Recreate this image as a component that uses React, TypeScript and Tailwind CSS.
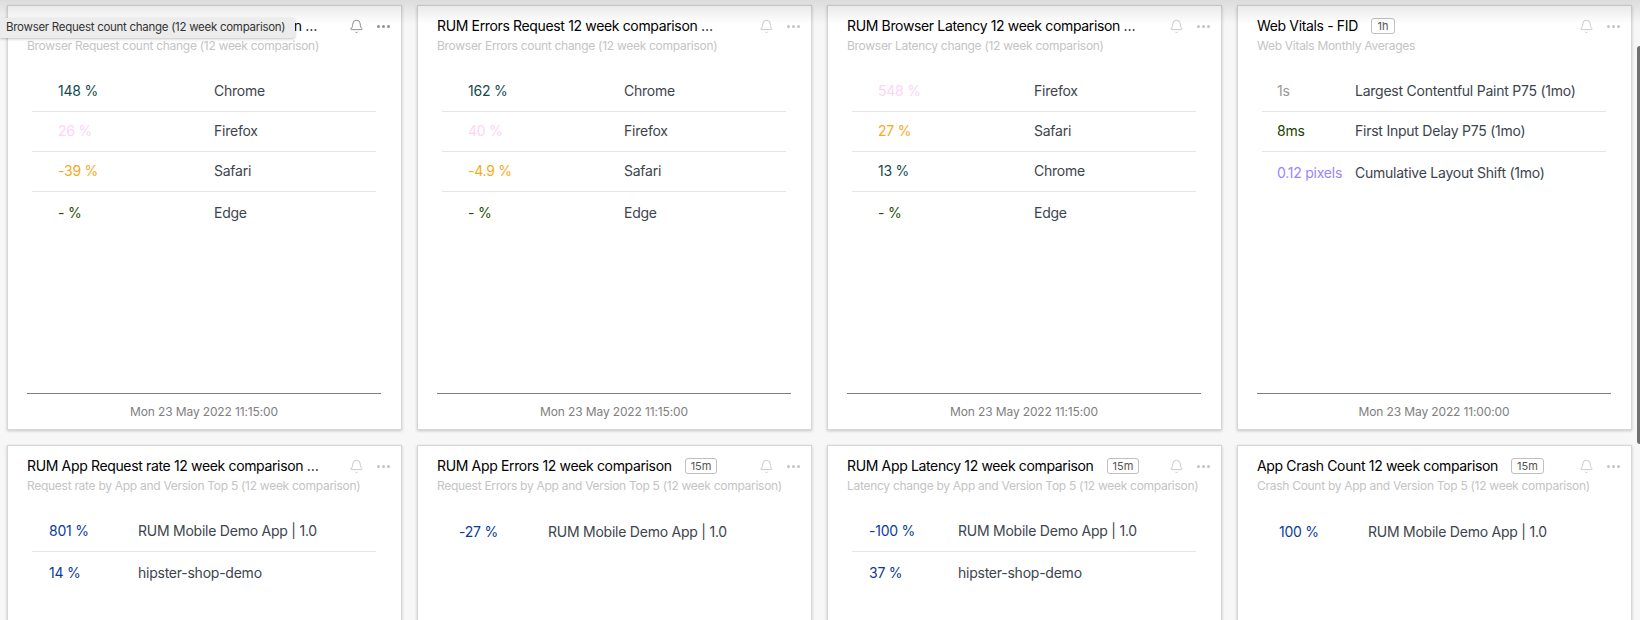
import { Bell } from "lucide-react";

type Row = { value: string; label: string; color: string };

type Panel = {
    title: string;
    subtitle: string;
    badge?: string;
    time?: string;
    valueCol: string;
    rows: Row[];
    hovered?: boolean;
};

const TEAL = "text-[#0f4c4c]";
const PINK = "text-[#fdd5f6]";
const ORANGE = "text-[#f8a922]";
const GREEN = "text-[#1d5200]";
const BLUE = "text-[#0b3a9e]";

const panels: Panel[] = [
    {
        title: "RUM Browser Request 12 week comparison …",
        subtitle: "Browser Request count change (12 week comparison)",
        time: "Mon 23 May 2022 11:15:00",
        valueCol: "w-[182px] pl-[26px]",
        hovered: true,
        rows: [
            { value: "148 %", label: "Chrome", color: TEAL },
            { value: "26 %", label: "Firefox", color: PINK },
            { value: "-39 %", label: "Safari", color: ORANGE },
            { value: "- %", label: "Edge", color: GREEN },
        ],
    },
    {
        title: "RUM Errors Request 12 week comparison …",
        subtitle: "Browser Errors count change (12 week comparison)",
        time: "Mon 23 May 2022 11:15:00",
        valueCol: "w-[182px] pl-[26px]",
        rows: [
            { value: "162 %", label: "Chrome", color: TEAL },
            { value: "40 %", label: "Firefox", color: PINK },
            { value: "-4.9 %", label: "Safari", color: ORANGE },
            { value: "- %", label: "Edge", color: GREEN },
        ],
    },
    {
        title: "RUM Browser Latency 12 week comparison …",
        subtitle: "Browser Latency change (12 week comparison)",
        time: "Mon 23 May 2022 11:15:00",
        valueCol: "w-[182px] pl-[26px]",
        rows: [
            { value: "548 %", label: "Firefox", color: PINK },
            { value: "27 %", label: "Safari", color: ORANGE },
            { value: "13 %", label: "Chrome", color: TEAL },
            { value: "- %", label: "Edge", color: GREEN },
        ],
    },
    {
        title: "Web Vitals - FID",
        subtitle: "Web Vitals Monthly Averages",
        badge: "1h",
        time: "Mon 23 May 2022 11:00:00",
        valueCol: "w-[93px] pl-[15px]",
        rows: [
            { value: "1s", label: "Largest Contentful Paint P75 (1mo)", color: "text-[#999999]" },
            { value: "8ms", label: "First Input Delay P75 (1mo)", color: "text-[#1a4000]" },
            { value: "0.12 pixels", label: "Cumulative Layout Shift (1mo)", color: "text-[#9b85ff]" },
        ],
    },
    {
        title: "RUM App Request rate 12 week comparison …",
        subtitle: "Request rate by App and Version Top 5 (12 week comparison)",
        valueCol: "w-[106px] pl-[17px]",
        rows: [
            { value: "801 %", label: "RUM Mobile Demo App | 1.0", color: BLUE },
            { value: "14 %", label: "hipster-shop-demo", color: BLUE },
        ],
    },
    {
        title: "RUM App Errors 12 week comparison",
        subtitle: "Request Errors by App and Version Top 5 (12 week comparison)",
        badge: "15m",
        valueCol: "w-[106px] pl-[17px]",
        rows: [{ value: "-27 %", label: "RUM Mobile Demo App | 1.0", color: BLUE }],
    },
    {
        title: "RUM App Latency 12 week comparison",
        subtitle: "Latency change by App and Version Top 5 (12 week comparison)",
        badge: "15m",
        valueCol: "w-[106px] pl-[17px]",
        rows: [
            { value: "-100 %", label: "RUM Mobile Demo App | 1.0", color: BLUE },
            { value: "37 %", label: "hipster-shop-demo", color: BLUE },
        ],
    },
    {
        title: "App Crash Count 12 week comparison",
        subtitle: "Crash Count by App and Version Top 5 (12 week comparison)",
        badge: "15m",
        valueCol: "w-[106px] pl-[17px]",
        rows: [{ value: "100 %", label: "RUM Mobile Demo App | 1.0", color: BLUE }],
    },
];

function Dots({ className }: { className: string }) {
    return (
        <svg width="13" height="3" viewBox="0 0 13 3" className={className} fill="currentColor">
            <circle cx="1.5" cy="1.5" r="1.5" />
            <circle cx="6.5" cy="1.5" r="1.5" />
            <circle cx="11.5" cy="1.5" r="1.5" />
        </svg>
    );
}

function Card({ panel }: { panel: Panel }) {
    return (
        <div className="relative flex h-[425px] flex-col border border-[#d6d6d6] bg-white shadow-[0_1px_3px_rgba(0,0,0,0.2)]">
            <div className="flex h-[30px] items-end pl-[19px] pr-[11px]">
                <div className="flex min-w-0 flex-1 items-center">
                    <span className="whitespace-nowrap text-[14px] leading-[20px] tracking-[-0.35px] text-black">
                        {panel.title}
                    </span>
                    {panel.badge && (
                        <span className="ml-[13px] flex h-[16px] min-w-[24px] items-center justify-center rounded-[3px] border border-[#c0c0c0] px-[5px] text-[11px] text-[#555555]">
                            {panel.badge}
                        </span>
                    )}
                </div>
                <div className="flex h-[20px] items-center">
                    <Bell
                        size={15}
                        strokeWidth={1.4}
                        className={panel.hovered ? "text-[#808080]" : "text-[#c4c4c4]"}
                    />
                    <Dots className={panel.hovered ? "ml-[13px] text-[#909090]" : "ml-[13px] text-[#c4c4c4]"} />
                </div>
            </div>
            <div className="mt-[1px] whitespace-nowrap pl-[19px] text-[12px] leading-[18px] tracking-[-0.28px] text-[#c4c4c4]">
                {panel.subtitle}
            </div>
            <div className="ml-[24px] mr-[25px] mt-[17px]">
                {panel.rows.map((row) => (
                    <div
                        key={row.label}
                        className="flex h-[40px] items-center border-b border-[#e6e6e6] pb-[2px] text-[14px] tracking-[-0.24px] last:border-b-0 last:pb-0 last:pt-[1px] only:pb-[2px] only:pt-0"
                    >
                        <span className={`${panel.valueCol} shrink-0 whitespace-nowrap ${row.color}`}>{row.value}</span>
                        <span className="whitespace-nowrap text-[#3c444d]">{row.label}</span>
                    </div>
                ))}
            </div>
            {panel.time && (
                <div className="ml-[19px] mr-[20px] mt-auto flex h-[36px] items-center justify-center border-t border-[#808080] text-[12px] tracking-[-0.13px] text-[#808080]">
                    {panel.time}
                </div>
            )}
        </div>
    );
}

export default function App() {
    return (
        <div className="relative h-[620px] overflow-hidden bg-[#f7f7f7] font-['Inter',sans-serif]">
            <div className="grid grid-cols-[repeat(4,395px)] gap-[15px] pl-[7px] pt-[5px]">
                {panels.map((panel) => (
                    <Card key={panel.title} panel={panel} />
                ))}
            </div>

            {/* shadow from the sticky header above the grid */}
            <div className="pointer-events-none absolute inset-x-0 top-0 h-[24px] bg-gradient-to-b from-[#0000001c] to-transparent" />

            {/* tooltip for the hovered panel title */}
            <div className="absolute left-0 top-[18px] flex h-[20px] w-[295px] items-center whitespace-nowrap rounded-r-[3px] bg-[#ececec] pl-[6px] text-[11.5px] tracking-[-0.28px] text-[#333333] shadow-[0_1px_3px_rgba(0,0,0,0.25)]">
                Browser Request count change (12 week comparison)
            </div>

            {/* overlay scrollbar */}
            <div className="absolute right-0 top-[46px] h-[398px] w-[3px] rounded-l-[3px] bg-[#707070]" />
        </div>
    );
}
